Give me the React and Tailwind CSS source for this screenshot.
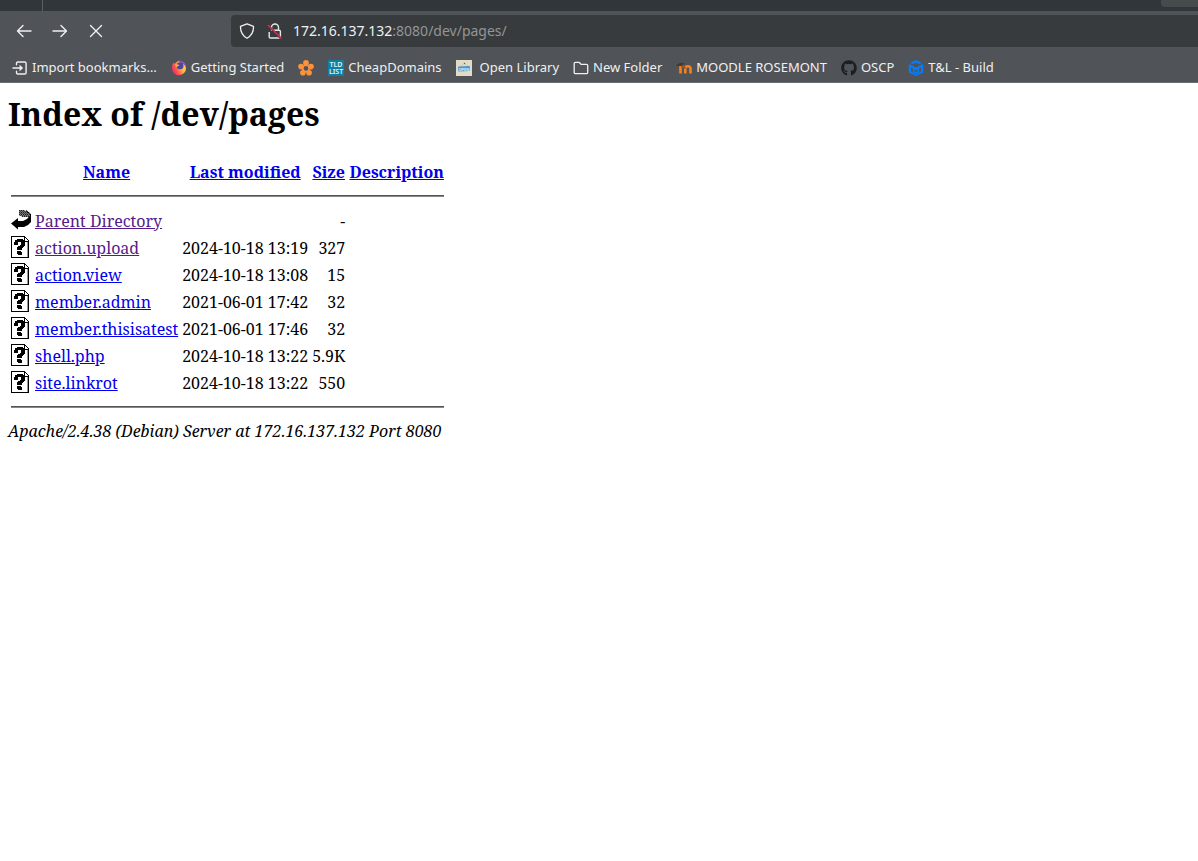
import React from "react";
import { FaGithub } from "react-icons/fa";

const files = [
  { name: "action.upload", date: "2024-10-18 13:19", size: "327", visited: true },
  { name: "action.view", date: "2024-10-18 13:08", size: "15" },
  { name: "member.admin", date: "2021-06-01 17:42", size: "32" },
  { name: "member.thisisatest", date: "2021-06-01 17:46", size: "32" },
  { name: "shell.php", date: "2024-10-18 13:22", size: "5.9K" },
  { name: "site.linkrot", date: "2024-10-18 13:22", size: "550" },
];

function Stroke({ d, className = "size-4", width = 1.3 }) {
  return (
    <svg viewBox="0 0 16 16" className={className} fill="none" stroke="currentColor" strokeWidth={width} strokeLinecap="round" strokeLinejoin="round" aria-hidden="true">
      <path d={d} />
    </svg>
  );
}

function InsecureLock() {
  return (
    <svg viewBox="0 0 16 16" className="size-4" fill="none" aria-hidden="true">
      <path d="M4.500 7V4.500a3.500 3.500 0 0 1 7 0V7M4 7.200h8.200a1.200 1.200 0 0 1 1.200 1.200v5.400a1.200 1.200 0 0 1-1.200 1.200H3.400a1.200 1.200 0 0 1-1.200-1.200V9" stroke="#e6e7e8" strokeWidth="1.4" />
      <path d="M1 2.500 14 15.500" stroke="#383b3d" strokeWidth="2" />
      <path d="M1 2 14.500 15.500" stroke="#e22850" strokeWidth="1.4" />
    </svg>
  );
}

function ImportIcon() {
  return (
    <svg viewBox="0 0 16 16" className="size-4" fill="none" stroke="#f0f0f1" strokeWidth="1.4" strokeLinecap="round" strokeLinejoin="round" aria-hidden="true">
      <path d="M4.500 4.800V3.300A1.300 1.300 0 0 1 5.800 2h7a1.300 1.300 0 0 1 1.300 1.300v9.400a1.300 1.300 0 0 1-1.300 1.300h-7a1.300 1.300 0 0 1-1.300-1.300v-1.500M1 8h8" />
      <path d="M8 5.500 10.800 8 8 10.500z" fill="#f0f0f1" strokeWidth="0.6" />
    </svg>
  );
}

function FirefoxIcon() {
  return (
    <svg viewBox="0 0 16 16" className="size-4" aria-hidden="true">
      <defs>
        <linearGradient id="fx" x1="1" y1="0.3" x2="0.1" y2="0.8">
          <stop offset="0" stopColor="#ffe050" />
          <stop offset="0.4" stopColor="#ffb040" />
          <stop offset="0.75" stopColor="#ff5050" />
          <stop offset="1" stopColor="#e9306f" />
        </linearGradient>
      </defs>
      <path d="M8 .8c4 0 7 3 7 7.200a7 7 0 0 1-14 .5C.8 6 1.500 4 2.800 2.800L3.500 4 5 2.500z" fill="url(#fx)" />
      <path d="M7 .6c4.500-.6 8 2.800 8.200 7.400-.9-1.500-1.700-3.500-3.700-4.400C10 2.700 8.500 2 7 .6z" fill="#8044df" />
      <circle cx="9" cy="5.800" r="3.500" fill="#55449f" />
      <path d="M4 4.500c2-.8 3.500-.2 4.500 1-1.500.2-2.400.9-2.700 2-.5-.7-1.300-1.500-1.800-3z" fill="#ffae3b" />
    </svg>
  );
}

function FlowerIcon() {
  return (
    <svg viewBox="0 0 16 16" className="size-4" aria-hidden="true">
      <g fill="#fb923c">
        <circle cx="8" cy="3" r="2.900" />
        <circle cx="13" cy="6.600" r="2.800" />
        <circle cx="11.100" cy="12.800" r="2.800" />
        <circle cx="4.900" cy="12.800" r="2.800" />
        <circle cx="3" cy="6.600" r="2.800" />
        <circle cx="8" cy="8.500" r="4" />
      </g>
      <circle cx="8" cy="8.400" r="2.300" fill="#505358" />
    </svg>
  );
}

function TldIcon() {
  return (
    <svg viewBox="0 0 16 16" className="size-4" aria-hidden="true">
      <rect width="16" height="16" fill="#0c7fa3" />
      <g fill="#e4f4f8" fontFamily="Noto Sans, sans-serif" fontWeight="600" fontSize="7" textAnchor="middle">
        <text x="8" y="7">TLD</text>
        <text x="8" y="14">LIST</text>
      </g>
    </svg>
  );
}

function OpenIcon() {
  return (
    <svg viewBox="0 0 16 16" className="size-4" aria-hidden="true">
      <rect width="16" height="16" fill="#e2dcc4" />
      <path d="M4 6.500 8.500 3.300 12 6" fill="none" stroke="#c9bfaa" strokeWidth="0.600" />
      <circle cx="8.500" cy="3.500" r="0.700" fill="#665c50" />
      <rect x="2" y="6.200" width="12" height="5" rx="0.800" fill="#4d94d0" transform="rotate(-2 8 8)" />
      <text x="8" y="10.500" fill="#e7f0f5" fontFamily="Noto Sans, sans-serif" fontWeight="700" fontSize="4" textAnchor="middle">OPEN</text>
    </svg>
  );
}

function MoodleIcon() {
  return (
    <svg viewBox="0 0 16 16" className="size-4" fill="none" aria-hidden="true">
      <path d="M4.500 13.500V6" stroke="#f58220" strokeWidth="2.600" />
      <path d="M9.300 13.500V8q0-1.800 2.600-1.800T14.500 8.500v5" stroke="#f58220" strokeWidth="2.600" />
      <path d="M5 6.500q3-1 4.300 2" stroke="#9c5b28" strokeWidth="2" />
      <path d="M0 5 4.500 2.800l4 .5L5.500 6C4 5.500 2.500 6 1.500 7z" fill="#403a36" />
      <path d="M1 5.500v6" stroke="#7b4c2d" strokeWidth="1" />
    </svg>
  );
}

function BuildIcon() {
  return (
    <svg viewBox="0 0 16 16" className="size-4" fill="#087cf5" aria-hidden="true">
      <path d="M8 0 13.800 2.800 11.500 4.200 8 2.500 4.500 4.200 2.200 2.800z" />
      <path d="M.8 3.800 8 7.600l7.200-3.800v8.700L8 16l-7.200-3.500z" />
      <path d="M3 7.300v3.900l1.800 1V8.300zM13 7.300v3.900l-1.800 1V8.300zM6.500 9.600v1.600l1.500.9 1.500-.9V9.600L8 10.400z" fill="#505358" />
      <path d="M4.800 12.200 8 13.900l3.200-1.700v.8L8 14.600 4.800 13z" fill="#505358" />
    </svg>
  );
}

function BackIcon() {
  return (
    <svg viewBox="0 0 20 22" className="block h-[22px] w-5" aria-hidden="true">
      <path d="M8 1h5l4 2 2 3-1 2h-5l-5-1.500z" fill="#777" />
      <path d="M8 1.500h6M8 3.500h9M8 5.500h11M11 7.500h8" stroke="#222" strokeDasharray="1 1" />
      <path d="M9 2.500h7M9 4.500h9M9 6.500h10" stroke="#444" strokeDasharray="1 1" />
      <path d="M0 14.500 7 9v3h5l4-2 3-3.500h1V13l-3 3-4 2H7v2.500z" fill="#000" />
      <path d="M15 1.500 19.500 5v3" stroke="#000" fill="none" />
    </svg>
  );
}

function UnknownIcon() {
  return (
    <svg viewBox="0 0 20 22" className="block h-[22px] w-5" shapeRendering="crispEdges" aria-hidden="true">
      <path d="M0 0h13l5 5v17H0z" fill="#000" />
      <path d="M1 1h12v5h4v15H1z" fill="#fff" />
      <path d="M14 2v3h3z" fill="#fff" />
      <path d="M16 6v15" stroke="#999" />
      <path d="M3 9V6h1V4h2V3h6v1h1v1h1v5h-1v1h-1v1h-1v2H6v-3h1v-1h2V9h1V6H7v3z" fill="#000" />
      <path d="M6 15h4v1h1v3H7v-1H6z" fill="#000" />
    </svg>
  );
}

function Bookmark({ icon, children, label }) {
  return (
    <a href="#bookmark" aria-label={label} className="flex h-8 shrink-0 items-center gap-1 whitespace-nowrap">
      {icon}
      {children}
    </a>
  );
}

function Rule() {
  return (
    <tr>
      <td colSpan={5} className="p-px">
        <hr className="my-2 h-[2px] border-t border-b border-t-[#555555] border-b-[#888888]" />
      </td>
    </tr>
  );
}

function NavButton({ label, d }) {
  return (
    <button type="button" aria-label={label} className="flex size-9 items-center justify-center">
      <Stroke d={d} width={1.4} />
    </button>
  );
}

export default function App() {
  return (
    <div className="min-h-screen bg-white">
      <header className="overflow-hidden border-b border-[#686b70] bg-[#505358] font-['Noto_Sans',sans-serif] text-[#eff0f1]">
        <div className="flex h-[11px] justify-between bg-[#31363b]">
          <div className="w-[43px] border-r border-[#5b5e62]" />
          <div className="h-[7px] w-[37px] rounded-bl bg-[#464b4e]" />
        </div>
        <div className="flex h-10 items-center pl-1.5">
          <div className="flex w-[225px]">
            <NavButton label="Back" d="M15 8H1.500M7 2.500 1.500 8 7 13.500" />
            <NavButton label="Forward" d="M1 8h13.500M9 2.500 14.500 8 9 13.500" />
            <NavButton label="Stop" d="M2.500 2.500l11 11M13.500 2.500l-11 11" />
          </div>
          <div className="flex h-8 flex-1 items-center gap-3 rounded-l bg-[#383b3d] pl-2">
            <Stroke d="M8 .8 14.500 3.300c.2 4.700-1.300 9-6.500 12C2.800 12.300 1.300 8 1.500 3.300z" />
            <InsecureLock />
            <a href="#address" className="-ml-0.5 text-sm">
              172.16.137.132<span className="text-[#939596]">:8080/dev/pages/</span>
            </a>
          </div>
        </div>
        <nav className="flex h-[31px] items-center gap-3.5 pt-0.5 pl-3 text-[13px]">
          <Bookmark icon={<ImportIcon />}>Import bookmarks…</Bookmark>
          <Bookmark icon={<FirefoxIcon />}>Getting Started</Bookmark>
          <Bookmark icon={<FlowerIcon />} label="Flower" />
          <Bookmark icon={<TldIcon />}>CheapDomains</Bookmark>
          <Bookmark icon={<OpenIcon />}><span className="pl-1">Open Library</span></Bookmark>
          <Bookmark icon={<Stroke d="M1.200 12.500V3.500A1.200 1.200 0 0 1 2.400 2.300H6l2 2h5.500A1.200 1.200 0 0 1 14.700 5.500v7a1.200 1.200 0 0 1-1.200 1.200H2.400a1.200 1.200 0 0 1-1.200-1.200z" />}>New Folder</Bookmark>
          <Bookmark icon={<MoodleIcon />}>MOODLE ROSEMONT</Bookmark>
          <Bookmark icon={<FaGithub className="size-4 text-[#1b1f23]" />}>OSCP</Bookmark>
          <Bookmark icon={<BuildIcon />}>T&amp;L - Build</Bookmark>
        </nav>
      </header>

      <main className="px-2 pt-2 font-['Noto_Serif','Droid_Serif','Liberation_Serif',serif] text-base leading-[22px] text-black">
        <h1 className="text-[32px] leading-[46px] font-bold">Index of /dev/pages</h1>
        <table className="mt-5 border-separate border-spacing-[2px] whitespace-nowrap">
          <colgroup>
            <col className="w-[22px]" />
            <col className="w-[145px]" />
            <col className="w-[128px]" />
            <col className="w-[35px]" />
            <col className="w-[97px]" />
          </colgroup>
          <thead>
            <tr className="h-[25px] text-[#0000ee]">
              <td className="p-px" />
              <th className="p-px"><a href="#name" className="underline">Name</a></th>
              <th className="p-px"><a href="#modified" className="underline">Last modified</a></th>
              <th className="p-px"><a href="#size" className="underline">Size</a></th>
              <th className="p-px"><a href="#description" className="underline">Description</a></th>
            </tr>
          </thead>
          <tbody>
            <Rule />
            <tr className="h-[25px]">
              <td className="p-px align-top"><BackIcon /></td>
              <td className="p-px"><a href="#parent" className="text-[#551a8b] underline">Parent Directory</a></td>
              <td />
              <td className="p-px text-right">-</td>
              <td />
            </tr>
            {files.map((f) => (
              <tr key={f.name} className="h-[25px]">
                <td className="p-px align-top"><UnknownIcon /></td>
                <td className="p-px">
                  <a href={"#" + f.name} className={f.visited ? "text-[#551a8b] underline" : "text-[#0000ee] underline"}>{f.name}</a>
                </td>
                <td className="p-px text-right">{f.date}</td>
                <td className="p-px text-right">{f.size}</td>
                <td />
              </tr>
            ))}
            <Rule />
          </tbody>
        </table>
        <address className="leading-6 italic">Apache/2.4.38 (Debian) Server at 172.16.137.132 Port 8080</address>
      </main>
    </div>
  );
}
